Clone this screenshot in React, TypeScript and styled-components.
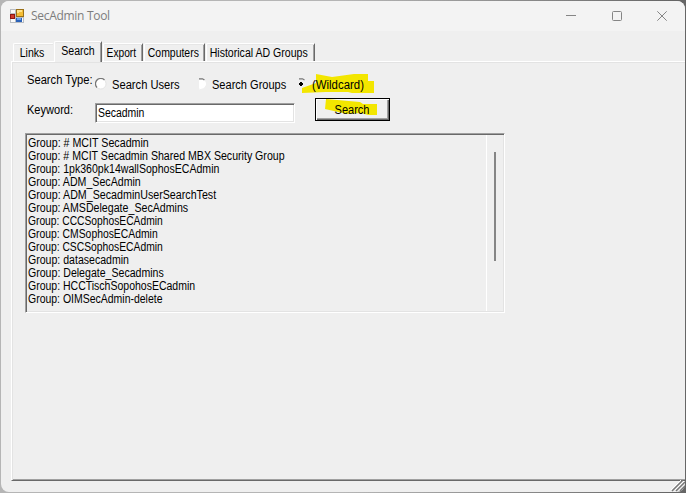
import React from "react";
import styled, { createGlobalStyle } from "styled-components";

const GlobalStyle = createGlobalStyle`
  * { box-sizing: border-box; }
  body { margin: 0; overflow: hidden; background: #b4b4b4; }
`;

const Desktop = styled.div`
  width: 686px;
  height: 493px;
  padding: 1px;
  background: linear-gradient(90deg, #b5b5b5 0 50%, #666 98%);
  font-family: "Liberation Sans", Arial, sans-serif;
  font-size: 12px;
  color: #000;
`;

const Window = styled.div`
  display: flex;
  flex-direction: column;
  width: 684px;
  height: 491px;
  border-radius: 8px;
  overflow: hidden;
  background: #efefef;
`;

const TitleBar = styled.header`
  display: flex;
  align-items: center;
  flex: none;
  height: 30px;
  padding-left: 9px;
  background: #f3f3f3;
`;

const Title = styled.h1`
  flex: 1;
  margin: 0 0 0 7px;
  font: 400 12px/16px "Open Sans", sans-serif;
  letter-spacing: -0.3px;
  color: #7d7d7d;
`;

const WindowButton = styled.button`
  display: grid;
  place-items: center;
  width: 45.5px;
  height: 28px;
  padding: 0;
  border: 0;
  background: none;
`;

const Condensed = styled.span<{ $scale: number; $origin?: string }>`
  display: inline-block;
  white-space: pre;
  transform: scaleX(${(p) => p.$scale});
  transform-origin: ${(p) => p.$origin ?? "left"} center;
`;

const TabStrip = styled.nav`
  display: flex;
  align-items: flex-end;
  flex: none;
  height: 30px;
  padding-left: 12px;
`;

const Tab = styled.button<{ $width: number; $active?: boolean; $plain?: boolean }>`
  display: flex;
  align-items: center;
  justify-content: center;
  flex: none;
  width: ${(p) => p.$width}px;
  height: ${(p) => (p.$active ? 21 : 18)}px;
  margin: 0 1px ${(p) => (p.$active ? -1 : 0)}px 0;
  padding: ${(p) => (p.$active ? "0 0 2px" : "2px 3px 0 0")};
  border: solid #fff;
  border-width: 1px ${(p) => (p.$plain ? 0 : 1)}px 0 1px;
  border-right-color: #696969;
  border-radius: 2px 1px 0 0;
  background: #efefef;
  box-shadow: inset 0 1px #e6e6e6${(p) => (p.$plain ? "" : ", inset -1px 0 #a0a0a0")};
  font: inherit;
  line-height: 15px;
  white-space: nowrap;
  color: #000;
  position: relative;
`;

const Page = styled.main`
  flex: none;
  width: 676px;
  height: 420px;
  margin-left: 10px;
  padding: 0 0 0 13px;
  border-left: 1px solid #fff;
  border-top: 1px solid #fff;
  border-bottom: 1px solid #696969;
  box-shadow: inset 1px 1px #e3e3e3, inset 0 -1px #a0a0a0;
`;

const TypeRow = styled.div`
  display: grid;
  grid-template-columns: 70px 100px 100px 120px;
  height: 36px;
  padding-top: 10px;
  padding-left: 1px;
`;

const Label = styled.label`
  padding-left: 1px;
  line-height: 16px;
  white-space: nowrap;
`;

const Option = styled.div`
  display: flex;
  align-items: center;
  height: 16px;
  margin-top: 5px;
`;

const RadioIcon = styled.svg`
  position: relative;
  z-index: 1;
  flex: none;
  width: 12px;
  height: 12px;
  margin: -3px 5px 0 -1px;
`;

const Caption = styled.span`
  position: relative;
  isolation: isolate;
  line-height: 16px;
  white-space: nowrap;
`;

const Marker = styled.svg<{ $x: number; $y: number }>`
  position: absolute;
  left: ${(p) => p.$x}px;
  top: ${(p) => p.$y}px;
  z-index: -1;
  pointer-events: none;
`;

const KeywordRow = styled.div`
  display: grid;
  grid-template-columns: 70px 200px 75px;
  height: 35px;
  padding-left: 1px;
`;

const KeywordLabel = styled(Label)`
  padding-top: 4px;
`;

const TextInput = styled.div`
  width: 200px;
  height: 20px;
  margin: 5px 0 0 -1px;
  padding: 0 1px 0 2px;
  border: 1px solid;
  border-color: #a0a0a0 #fff #fff #a0a0a0;
  outline: 0;
  background: #fff;
  box-shadow: inset 1px 1px #696969, inset -1px -1px #e3e3e3;
  line-height: 18px;
`;

const SearchButton = styled.button`
  position: relative;
  isolation: isolate;
  width: 75px;
  height: 23px;
  margin-left: 19px;
  padding: 0;
  border: 1px solid #000;
  background: #efefef;
  box-shadow: inset 1px 1px #fff, inset -1px -1px #696969, inset -2px -2px #a0a0a0;
  font: inherit;
  color: #000;
`;

const ResultBox = styled.section`
  display: flex;
  width: 480px;
  height: 180px;
  border: 1px solid;
  border-color: #a0a0a0 #fff #fff #a0a0a0;
  box-shadow: inset 1px 1px #696969, inset -1px -1px #e3e3e3;
`;

const Results = styled.ul`
  flex: 1;
  margin: 0;
  padding: 3px 0 0 1.6px;
  list-style: none;
`;

const Result = styled.li`
  height: 13px;
  line-height: 13px;
  white-space: nowrap;
`;

const ScrollBar = styled.div`
  width: 18px;
  margin: 1px 0;
  padding: 17px 0 0 7px;
  border-left: 1px solid #fff;
`;

const Thumb = styled.div`
  width: 2px;
  height: 109px;
  background: #858585;
`;

const Grip = styled.svg`
  position: absolute;
  left: 671px;
  top: 480px;
`;

function Radio({ kind }: { kind: "full" | "clipped" | "checked" }) {
  return (
    <RadioIcon viewBox="0 0 12 12">
      {kind === "full" ? (
        <>
          <circle cx="6" cy="6" r="5" fill="#fff" />
          <path d="M2 9.5A5.2 5.2 0 0 1 9.5 2" fill="none" stroke="#777" strokeWidth="1.3" />
          <path d="M2 9.5A5.2 5.2 0 0 0 9.5 2" fill="none" stroke="#e3e3e3" />
        </>
      ) : (
        <>
          {kind === "clipped" && <path d="M4 2H8Q11 4 11 6T8 10H4Z" fill="#fff" />}
          <path d="M4 .8H7.5L9.5 2" fill="none" stroke="#777" strokeWidth="1.3" />
          {kind === "clipped" && <path d="M9.5 2.5Q12 6 9 9.5L4 11" fill="none" stroke="#fff" />}
          {kind === "checked" && <path d="M5 4H7V5H8V7H7V8H5V7H4V5H5Z" fill="#000" />}
        </>
      )}
    </RadioIcon>
  );
}

function AppIcon() {
  return (
    <svg width="14" height="14" viewBox="0 0 14 14">
      <path d="M0 0H14V14H0Z" fill="#b9bdc2" />
      <path d="M1 1H5V4H1ZM1 10H5V13H1ZM12 9H13V13H12Z" fill="#fafafa" />
      <path d="M6 0H14V8H6Z" fill="#9a7018" />
      <path d="M7 1H13V7H7Z" fill="#f4bd35" />
      <path d="M7 1H12V3H9V4H7Z" fill="#ffe28b" />
      <path d="M0 5H5V10H0Z" fill="#8e1612" />
      <path d="M1 6H4V9H1Z" fill="#d13b2c" />
      <path d="M6 9H12V13H6Z" fill="#2a62b9" />
      <path d="M7 9H11V11H7Z" fill="#6da2ec" />
    </svg>
  );
}

const results: [string, number][] = [
  ["# MCIT Secadmin", 0.889],
  ["# MCIT Secadmin Shared MBX Security Group", 0.883],
  ["1pk360pk14wallSophosECAdmin", 0.88],
  ["ADM_SecAdmin", 0.885],
  ["ADM_SecadminUserSearchTest", 0.89],
  ["AMSDelegate_SecAdmins", 0.886],
  ["CCCSophosECAdmin", 0.856],
  ["CMSophosECAdmin", 0.864],
  ["CSCSophosECAdmin", 0.86],
  ["datasecadmin", 0.88],
  ["Delegate_Secadmins", 0.881],
  ["HCCTischSopohosECadmin", 0.875],
  ["OIMSecAdmin-delete", 0.873],
];

export default function App() {
  return (
    <Desktop>
      <GlobalStyle />
      <Window>
        <TitleBar>
          <AppIcon />
          <Title>SecAdmin Tool</Title>
          <WindowButton aria-label="Minimize">
            <svg width="10" height="10"><path d="M0 4.5H10" stroke="#858585" /></svg>
          </WindowButton>
          <WindowButton aria-label="Maximize">
            <svg width="10" height="10"><rect x=".5" y=".5" width="9" height="9" rx="1" fill="none" stroke="#858585" /></svg>
          </WindowButton>
          <WindowButton aria-label="Close">
            <svg width="10" height="10"><path d="M.3 .3L9.7 9.7M9.7 .3L.3 9.7" stroke="#858585" /></svg>
          </WindowButton>
        </TitleBar>
        <TabStrip>
          <Tab $width={40} $plain><Condensed $scale={0.88} $origin="center">Links</Condensed></Tab>
          <Tab $width={48} $active><Condensed $scale={0.88} $origin="center">Search</Condensed></Tab>
          <Tab $width={40}><Condensed $scale={0.85} $origin="center">Export</Condensed></Tab>
          <Tab $width={61}><Condensed $scale={0.87} $origin="center">Computers</Condensed></Tab>
          <Tab $width={109}><Condensed $scale={0.88} $origin="center">Historical AD Groups</Condensed></Tab>
        </TabStrip>
        <Page>
          <TypeRow>
            <Label><Condensed $scale={0.93}>Search Type:</Condensed></Label>
            <Option><Radio kind="full" /><Caption><Condensed $scale={0.93}>Search Users</Condensed></Caption></Option>
            <Option><Radio kind="clipped" /><Caption><Condensed $scale={0.92}>Search Groups</Condensed></Caption></Option>
            <Option>
              <Radio kind="checked" />
              <Caption>
                <Condensed $scale={0.95}>(Wildcard)</Condensed>
                <Marker $x={-10} $y={-4} width="73" height="22">
                  <path d="M14 1L30 4L52 1H66V8H72V20H50L46 19H24L0 20V15L14 10Z" fill="#f3e600" />
                </Marker>
              </Caption>
            </Option>
          </TypeRow>
          <KeywordRow>
            <KeywordLabel><Condensed $scale={0.92}>Keyword:</Condensed></KeywordLabel>
            <TextInput role="textbox" contentEditable suppressContentEditableWarning spellCheck={false}>
              <Condensed $scale={0.87}>Secadmin</Condensed>
            </TextInput>
            <SearchButton>
              <Condensed $scale={0.92} $origin="center">Search</Condensed>
              <Marker $x={9} $y={0} width="53" height="18">
                <path d="M1 0L35 3L38 5H52V16H43L36 14L22 15L0 10Z" fill="#f3e600" />
              </Marker>
            </SearchButton>
          </KeywordRow>
          <ResultBox>
            <Results>
              {results.map(([name, scale]) => (
                <Result key={name}>
                  <Condensed $scale={scale}>{`Group: ${name}`}</Condensed>
                </Result>
              ))}
            </Results>
            <ScrollBar><Thumb /></ScrollBar>
          </ResultBox>
        </Page>
      </Window>
      <Grip width="14" height="12">
        <path d="M1 11L12 0M5 11L14 2M9 11L14 6" stroke="#777" strokeWidth="1.5" />
        <path d="M0 10L10 0M4 10L13 1" stroke="#fff" />
      </Grip>
    </Desktop>
  );
}
